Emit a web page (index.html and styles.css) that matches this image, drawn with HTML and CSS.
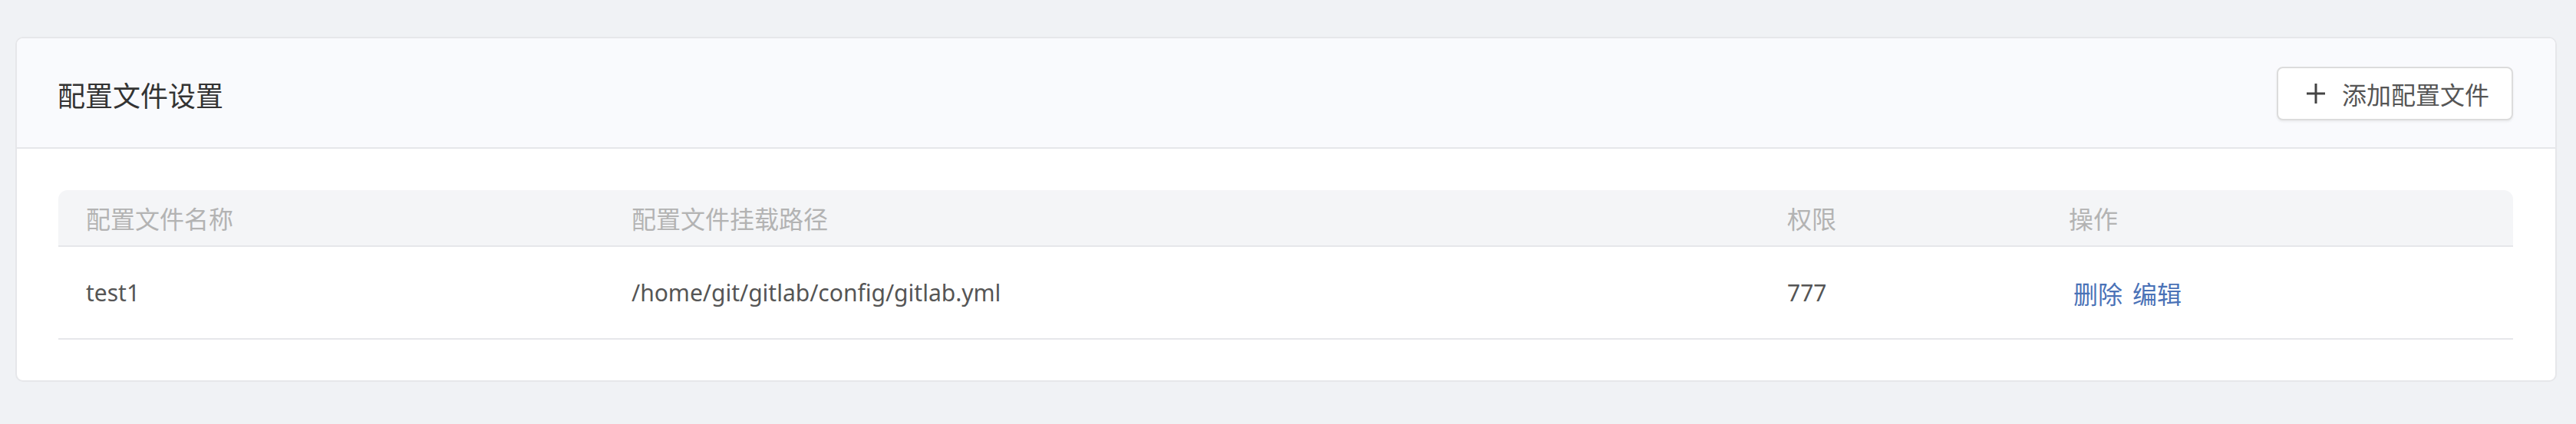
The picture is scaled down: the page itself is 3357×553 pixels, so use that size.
FILE: index.html
```html
<!DOCTYPE html>
<html lang="zh-CN">
<head>
<meta charset="utf-8">
<title>配置文件设置</title>
<link rel="stylesheet" href="styles.css">
</head>
<body>
<div class="card">
  <div class="card-header">
    <div class="title">配置文件设置</div>
    <button class="btn-add" type="button">
      <svg class="plus" width="24" height="28" viewBox="0 0 24 28"><path d="M12 1V27M0 14H24" stroke="#444" stroke-width="3" fill="none"/></svg>
      <span>添加配置文件</span>
    </button>
  </div>
  <div class="card-body">
    <table class="tbl">
      <colgroup>
        <col class="c1"><col class="c2"><col class="c3"><col class="c4">
      </colgroup>
      <thead>
        <tr><th>配置文件名称</th><th>配置文件挂载路径</th><th>权限</th><th>操作</th></tr>
      </thead>
      <tbody>
        <tr>
          <td>test1</td>
          <td>/home/git/gitlab/config/gitlab.yml</td>
          <td>777</td>
          <td><div class="actions"><a class="link">删除</a><a class="link">编辑</a></div></td>
        </tr>
      </tbody>
    </table>
  </div>
</div>
</body>
</html>
```
FILE: styles.css
```css
html, body {
  margin: 0;
  padding: 0;
  background: #f0f2f5;
}
body {
  padding: 48px 25px 53px 20px;
  font-family: "Noto Sans", "Noto Sans CJK SC", sans-serif;
}
.card {
  background: #fff;
  border: 2px solid #e6e7ea;
  border-radius: 10px;
  overflow: hidden;
}
.card-header {
  height: 142px;
  background: #f9fafd;
  border-bottom: 2px solid #e6e7ea;
  display: flex;
  align-items: center;
  justify-content: space-between;
  padding: 0 55px 0 53px;
}
.title {
  font-size: 36px;
  color: #333;
  font-family: "Noto Sans CJK SC", sans-serif;
  line-height: 1;
  position: relative;
  top: 2px;
}
.btn-add {
  box-sizing: border-box;
  width: 308px;
  height: 70px;
  margin-top: 2px;
  background: #fff;
  border: 2px solid #dcdcdc;
  border-radius: 8px;
  box-shadow: 0 2px 3px rgba(0,0,0,0.06);
  display: flex;
  align-items: center;
  padding: 0 0 0 37px;
  gap: 22px;
  font-family: "Noto Sans CJK SC", sans-serif;
  font-size: 32px;
  color: #555;
  line-height: 1;
}
.plus { display: block; }
.card-body {
  padding: 54px 55px 53px 54px;
}
.tbl {
  width: 100%;
  border-collapse: separate;
  border-spacing: 0;
  table-layout: fixed;
  font-size: 30px;
}
.c1 { width: 711px; }
.c2 { width: 1506px; }
.c3 { width: 367px; }
.tbl th {
  height: 72px;
  background: #f4f5f7;
  border-bottom: 2px solid #e6e7ea;
  text-align: left;
  font-weight: normal;
  color: #b3b3b3;
  font-size: 32px;
  padding: 0 36px;
  font-family: "Noto Sans CJK SC", sans-serif;
}
.tbl th:first-child { border-top-left-radius: 12px; }
.tbl th:last-child { border-top-right-radius: 12px; }
.tbl td {
  height: 119px;
  border-bottom: 2px solid #e6e7ea;
  color: #555;
  padding: 0 36px;
}
.actions {
  display: flex;
  gap: 13px;
  padding-left: 6px;
  font-size: 32px;
  font-family: "Noto Sans CJK SC", sans-serif;
}
.link {
  color: #4a72b7;
  cursor: pointer;
}
```
